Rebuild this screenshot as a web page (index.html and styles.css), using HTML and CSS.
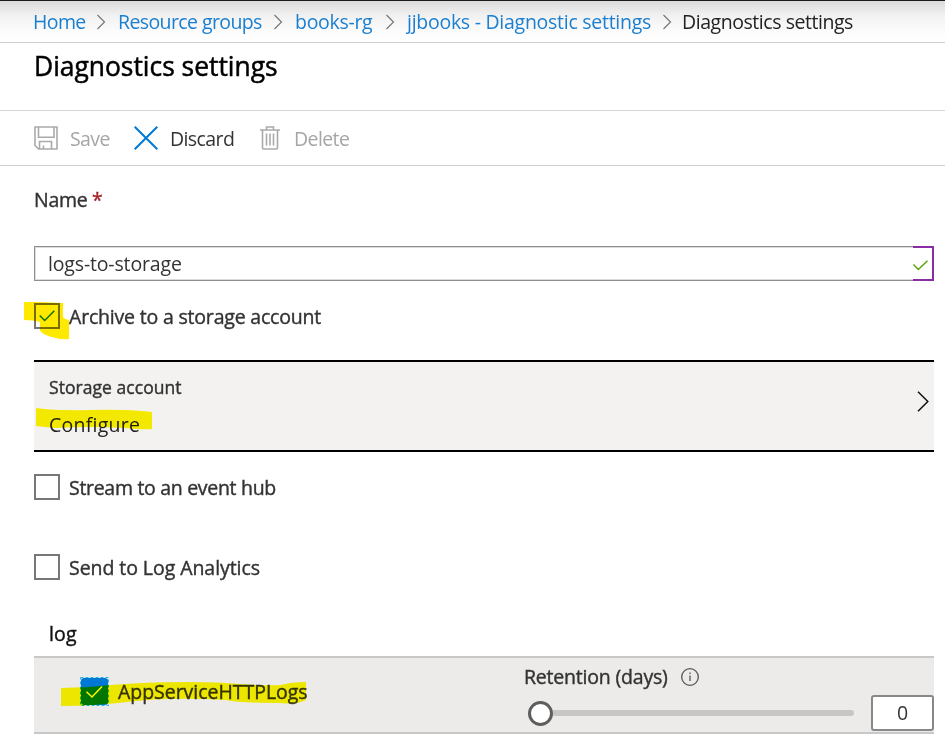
FILE: index.html
```html
<!DOCTYPE html>
<html lang="en">
<head>
<meta charset="utf-8">
<title>Diagnostics settings</title>
<link rel="stylesheet" href="styles.css">
</head>
<body>
<nav class="crumbs">
  <a class="c-home">Home</a>
  <svg class="sep" viewBox="0 0 10 16"><path d="M1.5 1L8.5 8L1.5 15"/></svg>
  <a class="c-groups">Resource groups</a>
  <svg class="sep" viewBox="0 0 10 16"><path d="M1.5 1L8.5 8L1.5 15"/></svg>
  <a class="c-rg">books-rg</a>
  <svg class="sep" viewBox="0 0 10 16"><path d="M1.5 1L8.5 8L1.5 15"/></svg>
  <a class="c-app">jjbooks - Diagnostic settings</a>
  <svg class="sep" viewBox="0 0 10 16"><path d="M1.5 1L8.5 8L1.5 15"/></svg>
  <span class="c-here">Diagnostics settings</span>
</nav>
<header class="heading"><h1>Diagnostics settings</h1></header>
<div class="toolbar">
  <button class="tool save off">
    <svg width="24" height="24" viewBox="0 0 24 24"><path d="M1 1H23V23H4.500L1 19.500ZM4.500 1V11.200H20V1M5.500 23V15.500H17.500V23M9.500 23V19.500" /></svg>
    <span>Save</span>
  </button>
  <button class="tool discard">
    <svg width="24" height="24" viewBox="0 0 24 24"><path d="M.7 .7L23.300 23.300M23.300 .7L.7 23.300"/></svg>
    <span>Discard</span>
  </button>
  <button class="tool delete off">
    <svg width="20" height="24" viewBox="0 0 20 24"><path d="M0 4H20M6.500 4V1H13.500V4M2.500 4V22Q2.500 23 3.500 23H16.500Q17.500 23 17.500 22V4M6.500 7.500V19.500M10 7.500V19.500M13.500 7.500V19.500"/></svg>
    <span>Delete</span>
  </button>
</div>
<main class="form">
  <div class="name-label medium"><span class="name-text">Name</span> <span class="req">*</span></div>
  <div class="name-field">
    <span class="name-value">logs-to-storage</span>
    <span class="valid"><svg width="15" height="11" viewBox="0 0 15 11"><path d="M.5 4.500L5.300 9.500L14.500 .7"/></svg></span>
  </div>
  <label class="option archive">
    <span class="box"><svg width="16" height="12" viewBox="0 0 16 12"><path d="M.7 5.500L5.700 10.500L15.300 .8"/></svg></span>
    <span class="option-text medium">Archive to a storage account</span>
    <svg class="mark" width="46" height="38" viewBox="0 0 46 38"><path d="M0 0H16L39 1V15Q40 17 45 18V37Q33 38 22 33Q17 31 16 28V20Q9 18 0 18Z"/></svg>
  </label>
  <section class="storage">
    <div class="storage-body">
      <div class="storage-title medium">Storage account</div>
      <div class="storage-value">Configure</div>
      <svg class="mark" width="117" height="22" viewBox="0 0 117 22"><path d="M0 0Q20 3 55 2Q90 1 116 4V21Q105 22 90 20Q50 18 20 20Q8 19 0 18Z"/></svg>
    </div>
    <svg class="chevron" width="12" height="21" viewBox="0 0 12 21"><path d="M1 .7L10.800 10.500L1 20.300"/></svg>
  </section>
  <label class="option stream"><span class="box"></span><span class="option-text medium">Stream to an event hub</span></label>
  <label class="option send"><span class="box"></span><span class="option-text medium">Send to Log Analytics</span></label>
  <h2 class="log-title medium">log</h2>
  <section class="log-row">
    <div class="log-pick">
      <span class="blue-box"><svg width="29" height="29" viewBox="0 0 29 29"><rect class="fill" x="1" y="1" width="27" height="27" rx="3"/><rect class="dash" x=".5" y=".5" width="28" height="28"/><path d="M6.500 14.700L12 20L22 9.500"/></svg></span>
      <span class="log-name medium">AppServiceHTTPLogs</span>
      <svg class="mark" width="247" height="24" viewBox="0 0 247 24"><path d="M0 6Q25 6 50 3Q85 0 125 0Q160 0 177 2Q205 4 220 3Q230 0 245 0V18Q235 23 220 21Q180 21 165 18Q115 15 75 19Q35 24 0 24Z"/></svg>
    </div>
    <div class="retention">
      <div class="ret-label"><span class="ret-text medium">Retention (days)</span>
        <svg width="18" height="18" viewBox="0 0 18 18"><circle cx="9" cy="9" r="8.300"/><path d="M9 7.500V13M9 4.500V6"/></svg>
      </div>
      <div class="slider"><span class="thumb"></span><span class="track"></span></div>
    </div>
    <div class="days">0</div>
  </section>
</main>
</body>
</html>
```

FILE: styles.css
```css
* { box-sizing: border-box; }
body {
  margin: 0;
  width: 945px;
  height: 742px;
  overflow: hidden;
  background: #fff;
  color: #333;
  font: 19.5px/28px "Open Sans", "Noto Sans", sans-serif;
}
svg { display: block; flex: none; fill: none; }
span, a, h1, h2, div { white-space: nowrap; }
.medium { -webkit-text-stroke: .4px currentColor; }

.crumbs {
  height: 43px;
  border-top: 1px solid #1f1a1f;
  border-bottom: 1px solid #d0d0d0;
  background: linear-gradient(#dcdbdc, #f1f1f1 35%, #fcfcfc 75%, #fff);
  padding: 1px 0 0 33px;
  display: flex;
  align-items: center;
}
.crumbs a { color: #1a7fd0; }
.crumbs a, .crumbs .c-here { flex: none; }
.crumbs .c-here { color: #222; letter-spacing: -.45px; margin-left: -2px; }
.sep { width: 10px; height: 16px; margin: 0 12px; stroke: #777; stroke-width: 1.2; }
.c-home { width: 51px; letter-spacing: -.6px; }
.c-groups { width: 143px; letter-spacing: -.6px; }
.c-rg { width: 78px; letter-spacing: -.3px; }
.c-app { width: 243px; letter-spacing: -.27px; }

.heading { height: 68px; padding: 4px 0 0 34px; border-bottom: 1px solid #d4d4d4; }
h1 { margin: 0; font-size: 26.400px; line-height: 38px; font-weight: 400; color: #000; letter-spacing: 0; -webkit-text-stroke: .5px #000; }

.toolbar { height: 55px; border-bottom: 1px solid #d0d0d0; padding-left: 34px; display: flex; align-items: center; }
.tool { border: 0; background: none; padding: 0; font: inherit; color: #333; display: flex; align-items: center; gap: 12px; letter-spacing: -.6px; }
.tool svg { stroke: #aaa; stroke-width: 1.6; }
.tool span { padding-top: 2px; }
.save { width: 100px; }
.discard { width: 126px; }
.discard svg { stroke: #0078d4; stroke-width: 2; }
.delete { gap: 14px; }
.off { color: #a6a6a6; }

.form { width: 934px; padding: 20px 0 0 34px; }
.name-label { height: 60px; line-height: 28px; letter-spacing: -.3px; }
.req { color: #a4262c; }
.name-field { height: 35px; border: 1px solid #8f8f8f; box-shadow: inset 0 0 0 1px #dcdcdc; border-right: 0; display: flex; align-items: stretch; justify-content: space-between; }
.name-value { padding-left: 13px; line-height: 33px; letter-spacing: -.16px; }
.valid { width: 21px; margin: -1px 0; background: #fff; border: 2px solid #8a2da5; border-left: 0; display: flex; align-items: center; padding-top: 3px; }
.valid svg { stroke: #57a300; stroke-width: 1.4; }

.option { position: relative; height: 26px; display: flex; align-items: center; gap: 9px; letter-spacing: -.3px; }
.option-text { padding-top: 2px; }
.box { width: 26px; height: 26px; border: 2px solid #777; display: flex; align-items: center; justify-content: center; flex: none; }
.box svg { stroke: #107c10; stroke-width: 1.5; }
.archive { margin-top: 22px; letter-spacing: -.19px; }
.mark { position: absolute; fill: #ffe900; mix-blend-mode: multiply; }
.archive .mark { left: -10px; top: -1px; }

.storage { margin-top: 31px; height: 92px; border-top: 2px solid #000; border-bottom: 2px solid #000; background: #f3f2f1; display: flex; justify-content: space-between; align-items: center; padding: 0 5px 0 15px; }
.storage-body { position: relative; height: 88px; padding-top: 11px; }
.storage-title { font-size: 17.500px; line-height: 28px; letter-spacing: .05px; }
.storage-value { color: #222; line-height: 28px; margin-top: 10px; letter-spacing: .25px; }
.storage .mark { left: -13px; top: 46px; fill: #fff500; }
.chevron { stroke: #111; stroke-width: 1.5; margin-top: -9px; }

.stream { margin-top: 22px; }
.send { margin-top: 54px; letter-spacing: -.06px; }
.log-title { margin: 40px 0 0 15px; height: 36px; font-size: inherit; line-height: 28px; font-weight: 400; color: #111; letter-spacing: .2px; }
.log-row { height: 78px; border-top: 2px solid #c8c8c8; border-bottom: 2px solid #c8c8c8; background: #ecebea; display: flex; }
.log-pick { position: relative; width: 490px; padding: 19px 0 0 46px; display: flex; align-items: flex-start; gap: 9px; }
.fill { fill: #0078d4; }
.dash { stroke: #22b5ec; stroke-width: 1; stroke-dasharray: 3 2; }
.blue-box path { stroke: #fff; stroke-width: 1.5; }
.log-name { line-height: 30px; letter-spacing: -.03px; }
.log-pick .mark { left: 27px; top: 24px; fill: #fffa00; }
.retention { width: 330px; padding-top: 5px; }
.ret-label { display: flex; align-items: center; height: 28px; letter-spacing: -.2px; }
.ret-text { width: 157px; }
.ret-label svg { stroke: #555; stroke-width: 1.3; }
.slider { display: flex; align-items: center; height: 24px; margin: 10px 0 0 4px; }
.thumb { width: 25px; height: 25px; border: 3px solid #605e5c; border-radius: 50%; background: #fff; flex: none; }
.track { width: 301px; height: 6px; border-radius: 0 3px 3px 0; background: #c8c6c4; flex: none; }
.days { width: 63px; height: 36px; margin: 37px 0 0 17px; border: 2px solid #8a8886; border-radius: 3px; background: #fff; text-align: center; line-height: 32px; flex: none; }
```
